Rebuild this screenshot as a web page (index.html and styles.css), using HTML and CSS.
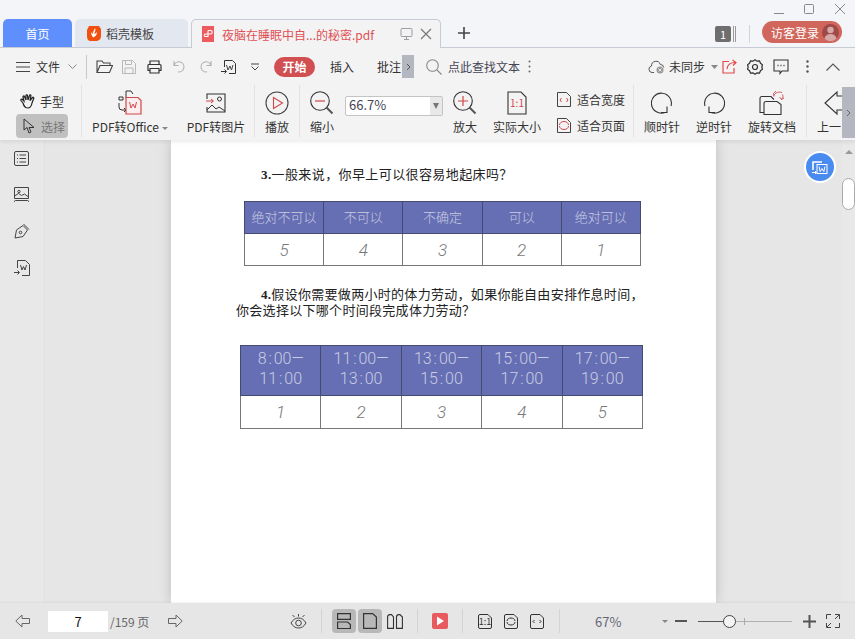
FILE: index.html
```html
<!DOCTYPE html>
<html lang="zh-CN">
<head>
<meta charset="utf-8">
<title>PDF</title>
<link rel="stylesheet" href="styles.css">
</head>
<body>
<div class="app">

  <header class="tabbar">
    <div class="tab tab-home">首页</div>
    <div class="tab tab-tpl">
      <svg class="ic" width="14" height="16" viewBox="0 0 14 16"><path d="M2 1h10l2 3v7c0 3-2 5-6 5H4c-3 0-4-2-4-5V5z" fill="#f2500f"/><path d="M8 3c1 2 0 4-1 6 1 0 2-1 3-2 0 3-2 5-4 5.500C5 11 4 9 4 7l1.500 2C6 7 7 5 8 3z" fill="#fff"/></svg>
      <span>稻壳模板</span>
    </div>
    <div class="tab tab-doc">
      <svg class="ic" width="12" height="16" viewBox="0 0 12 16"><rect width="12" height="16" fill="#ec5b5f"/><path d="M6 4.500h2.500a1.500 1.500 0 0 1 0 3.500H6m0-3.500V11M6 10.500H3.500a1 1 0 0 1 0-2.500H6" fill="none" stroke="#fff" stroke-width="1.100"/></svg>
      <span class="doc-title">夜脑在睡眠中自...的秘密.pdf</span>
      <svg class="ic ml-25" width="13" height="14" viewBox="0 0 13 14" fill="none" stroke="#9a9da3"><rect x="1" y="1.500" width="11" height="8" rx="1"/><path d="M6.500 9.500v3M4 12.500h5"/></svg>
      <svg class="ic ml-7" width="12" height="12" viewBox="0 0 12 12" fill="none" stroke="#777" stroke-width="1.200"><path d="M1 1l10 10M11 1L1 11"/></svg>
    </div>
    <svg class="ic plus" width="12" height="12" viewBox="0 0 12 12" fill="none" stroke="#444" stroke-width="1.600"><path d="M6 0v12M0 6h12"/></svg>

    <div class="tab-right">
      <div class="winctl">
        <svg class="ic" width="12" height="12" viewBox="0 0 12 12" fill="none" stroke="#888"><path d="M1 10.500h10"/></svg>
        <svg class="ic ml-18" width="12" height="12" viewBox="0 0 12 12" fill="none" stroke="#888"><rect x="1.500" y="1.500" width="9" height="9" rx="1"/></svg>
        <svg class="ic ml-19" width="12" height="12" viewBox="0 0 12 12" fill="none" stroke="#888"><path d="M1 1l10 10M11 1L1 11"/></svg>
      </div>
      <div class="acct">
        <div class="pagebadge"><span class="pagebadge-n">1</span></div>
        <div class="acct-sep"></div>
        <div class="login">
          <span>访客登录</span>
          <svg class="ic" width="17" height="17" viewBox="0 0 17 17"><circle cx="8.500" cy="8.500" r="8.500" fill="#9f4a48"/><circle cx="8.500" cy="6" r="3.200" fill="#d6a9a6"/><path d="M2.500 14.500c.5-3 3-4.500 6-4.500s5.500 1.500 6 4.500a8 8 0 0 1-12 0z" fill="#d6a9a6"/></svg>
        </div>
      </div>
    </div>
  </header>

  <nav class="menubar">
    <svg class="ic ml-16" width="14" height="10" viewBox="0 0 14 10" fill="none" stroke="#444"><path d="M0 .500h14M0 5h14M0 9.500h14"/></svg>
    <span class="ml-6">文件</span>
    <svg class="ic ml-8" width="9" height="5" viewBox="0 0 9 5" fill="none" stroke="#888"><path d="M.5.500l4 4 4-4"/></svg>
    <div class="vsep ml-9"></div>
    <svg class="ic ml-9" width="17" height="13" viewBox="0 0 17 13" fill="none" stroke="#444" stroke-width="1.100"><path d="M3 12.500H1V1h5l1.500 2H14v2.500M1 12.500l3-7h12.500l-3 7z"/></svg>
    <svg class="ic ml-9" width="14" height="14" viewBox="0 0 14 14" fill="none" stroke="#b8b8b8"><path d="M.5.500h10l3 3v10H.5zM3.500.500v4h6v-4M3 13.500V8h8v5.500"/></svg>
    <svg class="ic ml-11" width="15" height="14" viewBox="0 0 15 14" fill="none" stroke="#333" stroke-width="1.200"><path d="M3 4.500V1h9v3.500M3 10.500H1V5.500a1 1 0 0 1 1-1h11a1 1 0 0 1 1 1v5h-2M3 8.500h9V13H3z"/></svg>
    <svg class="ic ml-11" width="13" height="13" viewBox="0 0 13 13" fill="none" stroke="#b0b0b0" stroke-width="1.100"><path d="M1 1v4.500h4.500M1.200 5.300A5 5 0 1 1 5 11.800"/></svg>
    <svg class="ic ml-13" width="13" height="13" viewBox="0 0 13 13" fill="none" stroke="#b0b0b0" stroke-width="1.100"><path d="M12 1v4.500H7.500M11.800 5.300A5 5 0 1 0 8 11.800"/></svg>
    <svg class="ic ml-9" width="16" height="16" viewBox="0 0 16 16" fill="none" stroke="#333"><path d="M3.500 8V1.500h8l3 3v10H8"/><path d="M5.500 6l1.500 5 2-4 1.500 4 1.500-5" stroke="#444"/><path d="M0 12.500h5M3.500 10.500l2 2-2 2"/></svg>
    <svg class="ic ml-14" width="8" height="8" viewBox="0 0 8 8" fill="none" stroke="#444"><path d="M0 1h8M.5 3.500L4 7l3.500-3.500"/></svg>
    <div class="pill ml-15">开始</div>
    <span class="ml-15">插入</span>
    <span class="ml-23">批注</span>
    <div class="scroll-stub ml-1"><svg width="5" height="8" viewBox="0 0 5 8" fill="none" stroke="#555"><path d="M1 1l3 3-3 3"/></svg></div>
    <svg class="ic ml-12" width="16" height="16" viewBox="0 0 16 16" fill="none" stroke="#888" stroke-width="1.100"><circle cx="6.500" cy="6.500" r="5.800"/><path d="M11 11l4.500 4.500"/></svg>
    <span class="ml-6 find">点此查找文本</span>
    <svg class="ic ml-8" width="3" height="13" viewBox="0 0 3 13" fill="#666"><circle cx="1.500" cy="1.500" r="1"/><circle cx="1.500" cy="6.500" r="1"/><circle cx="1.500" cy="11.500" r="1"/></svg>

    <div class="menu-right">
      <svg class="ic" width="17" height="14" viewBox="0 0 17 14" fill="none" stroke="#555"><path d="M6 12.500H4a3.300 3.300 0 0 1-.5-6.500 4.500 4.500 0 0 1 8.800-1.500 3.500 3.500 0 0 1 3.500 3"/><circle cx="12" cy="10" r="3.500" fill="#999" stroke="none"/><path d="M10.500 8.500l3 3M13.500 8.500l-3 3" stroke="#fff" stroke-width=".8"/></svg>
      <span class="ml-4">未同步</span>
      <svg class="ml-6 ic" width="7" height="4" viewBox="0 0 7 4" fill="#888"><path d="M0 0h7L3.500 4z"/></svg>
      <svg class="ic ml-4" width="15" height="15" viewBox="0 0 15 15" fill="none" stroke="#e3494c" stroke-width="1.200"><path d="M7 2.500H1v11.500h11V9M5 10c.5-4 3-6.500 8-6.500M10.500 1L14 3.500 11 6.500"/></svg>
      <svg class="ic ml-10" width="16" height="16" viewBox="0 0 16 16" fill="none" stroke="#333" stroke-width="1.200"><path d="M8 .8l2 1.400 2.500-.2 1 2.300 2 1.500-.7 2.200.7 2.200-2 1.500-1 2.300-2.500-.2L8 15.200l-2-1.400-2.500.2-1-2.300-2-1.500.7-2.200L.5 5.800l2-1.500 1-2.300 2.500.2z"/><circle cx="8" cy="8" r="2.500"/></svg>
      <svg class="ic ml-10" width="16" height="16" viewBox="0 0 16 16" fill="none" stroke="#333" stroke-width="1.100"><path d="M1 1h14v11H9l-2 2.500V12H1z"/><path d="M4.500 6.500h1M7.500 6.500h1M10.500 6.500h1" stroke-width="1.400"/></svg>
      <svg class="ic ml-17" width="3" height="13" viewBox="0 0 3 13" fill="#555"><circle cx="1.500" cy="1.500" r="1.200"/><circle cx="1.500" cy="6.500" r="1.200"/><circle cx="1.500" cy="11.500" r="1.200"/></svg>
      <svg class="ic ml-17" width="14" height="8" viewBox="0 0 14 8" fill="none" stroke="#555" stroke-width="1.100"><path d="M.5 7.500L7 1l6.500 6.500"/></svg>
    </div>
  </nav>

  <section class="ribbon">
    <div class="group-mode">
      <div class="mode-row">
        <svg class="ic" width="16" height="15" viewBox="0 0 16 15" fill="none" stroke="#222" stroke-width="1.200"><path d="M3 9L1 6.500c-.5-1 .5-2 1.500-1L4 7 3 3c-.2-1 1-1.500 1.500-.5L6 6 6 1.500c0-1 1.500-1 1.500 0L8 6l1.500-4.500c.3-1 1.600-.6 1.400.4L10 6.500l2.500-3c.7-.7 1.700 0 1.200 1L12 9c-.5 3-1.500 5-4.500 5S4 12 3 9z"/></svg>
        <span class="ml-4">手型</span>
      </div>
      <div class="mode-row mode-active">
        <svg class="ic" width="12" height="16" viewBox="0 0 12 16" fill="none" stroke="#333"><path d="M1 1v11l3-2.500L6 15l2-1-2-4.500h5z"/></svg>
        <span class="ml-6">选择</span>
      </div>
    </div>
    <div class="vsep-r"></div>
    <div class="tool w-96">
      <svg class="tool-ic" width="24" height="26" viewBox="0 0 24 26" fill="none"><path d="M8 8V1h5l2 3M1 7h4v3H1zM1 13v4a3 3 0 0 0 3 3h4M6 18l2 2-2 2" stroke="#333"/><path d="M8 7.500h12l3 3V24H8z" fill="#fbeeee" stroke="#d2474a" stroke-width="1.200"/><path d="M11.500 12l1.500 6 2-4 2 4 1.500-6" stroke="#d2474a"/></svg>
      <span>PDF转Office<i class="caret"></i></span>
    </div>
    <div class="tool w-76">
      <svg class="tool-ic" width="20" height="20" viewBox="0 0 20 20" fill="none"><path d="M1 6V1h18v18H1v-5" stroke="#333" stroke-width="1.100"/><circle cx="13.500" cy="6" r="2" stroke="#333"/><path d="M0 8h7M5 6l2.500 2L5 10" stroke="#d2474a"/><path d="M1 17l5-5 4 4 3-2 6 4" stroke="#333"/></svg>
      <span>PDF转图片</span>
    </div>
    <div class="vsep-r"></div>
    <div class="tool w-44">
      <svg class="tool-ic" width="24" height="24" viewBox="0 0 24 24" fill="none"><circle cx="12" cy="12" r="11" stroke="#444" stroke-width="1.100"/><path d="M8.500 6.500v11l9-5.500z" stroke="#d2474a" stroke-width="1.100"/></svg>
      <span>播放</span>
    </div>
    <div class="vsep-r"></div>
    <div class="tool w-44">
      <svg class="tool-ic" width="24" height="24" viewBox="0 0 24 24" fill="none"><circle cx="10" cy="10" r="9.300" stroke="#333" stroke-width="1.100"/><path d="M5 10h10" stroke="#d2474a" stroke-width="1.200"/><path d="M16.500 16.500l6 6" stroke="#555" stroke-width="2"/></svg>
      <span>缩小</span>
    </div>
    <div class="zoombox">
      <span class="zoombox-val">66.7%</span>
      <div class="zoombox-btn"><i class="caret caret-d"></i></div>
    </div>
    <div class="tool w-44">
      <svg class="tool-ic" width="24" height="24" viewBox="0 0 24 24" fill="none"><circle cx="10" cy="10" r="9.300" stroke="#333" stroke-width="1.100"/><path d="M5 10h10M10 5v10" stroke="#d2474a" stroke-width="1.200"/><path d="M16.500 16.500l6 6" stroke="#555" stroke-width="2"/></svg>
      <span>放大</span>
    </div>
    <div class="tool w-60">
      <svg class="tool-ic" width="20" height="24" viewBox="0 0 20 24" fill="none"><path d="M1 1h13l5 5v17H1z" stroke="#333" stroke-width="1.100"/><text x="10" y="16" class="svg-ratio">1:1</text></svg>
      <span>实际大小</span>
    </div>
    <div class="group-fit">
      <div class="fit-row">
        <svg class="ic" width="14" height="15" viewBox="0 0 14 15" fill="none"><path d="M.5.500h9l4 4v10H.5z" stroke="#444"/><path d="M4.500 6L3 8l1.500 2M9.500 6L11 8l-1.500 2" stroke="#d2474a"/></svg>
        <span class="ml-6">适合宽度</span>
      </div>
      <div class="fit-row">
        <svg class="ic" width="14" height="15" viewBox="0 0 14 15" fill="none"><path d="M.5.500h9l4 4v10H.5z" stroke="#444"/><path d="M2.500 7c0-2 2-3.500 4.500-3.500M11.500 8c0 2-2 3.500-4.500 3.500M2.500 8c0 2 2 3.500 4.500 3.500M11.500 7c0-2-2-3.500-4.500-3.500" stroke="#d2474a"/></svg>
        <span class="ml-6">适合页面</span>
      </div>
    </div>
    <div class="vsep-r"></div>
    <div class="tool w-56">
      <svg class="tool-ic" width="22" height="22" viewBox="0 0 22 22" fill="none" stroke="#333" stroke-width="1.100"><path d="M14 20.500A10 10 0 1 1 20 14M16 14.500v6h-6"/></svg>
      <span>顺时针</span>
    </div>
    <div class="tool w-48">
      <svg class="tool-ic" width="22" height="22" viewBox="0 0 22 22" fill="none" stroke="#333" stroke-width="1.100"><path d="M8 20.500A10 10 0 1 0 2 14M6 14.500v6h6"/></svg>
      <span>逆时针</span>
    </div>
    <div class="tool w-68">
      <svg class="tool-ic" width="26" height="25" viewBox="0 0 26 25" fill="none"><path d="M5 22H1V8a2 2 0 0 1 2-2h9l3 3" stroke="#333" stroke-width="1.100"/><path d="M5 13a2 2 0 0 1 2-2h11l4 3v10H5z" stroke="#333" stroke-width="1.100"/><path d="M15 5c1-3 5-4 8-3M17 .5L14.500 3 15 6M22 9c2-1 2.500-3 1.500-5M20.500 6.500L22.500 9l2.500-1.500" stroke="#d2474a" stroke-width=".9"/></svg>
      <span>旋转文档</span>
    </div>
    <div class="vsep-r"></div>
    <div class="tool tool-last">
      <svg class="tool-ic" width="18" height="24" viewBox="0 0 18 24" fill="none" stroke="#333" stroke-width="1.100"><path d="M18 5h-5V1L1 12l12 11v-4h5"/></svg>
      <span>上一</span>
    </div>
    <div class="ribbon-more"><svg width="5" height="8" viewBox="0 0 5 8" fill="none" stroke="#666"><path d="M1 1l3 3-3 3"/></svg></div>
  </section>

  <main class="workspace">
    <aside class="sidebar">
      <svg width="15" height="15" viewBox="0 0 15 15" fill="none" stroke="#444"><rect x=".5" y=".5" width="14" height="14" rx="1.500"/><path d="M5.500 4h6.500M5.500 7.500h6.500M5.500 11h6.500M3 4h1M3 7.500h1M3 11h1"/></svg>
      <svg width="15" height="16" viewBox="0 0 15 16" fill="none" stroke="#444"><path d="M.5.500h14v11H.5zM.5 15v-.5a1 1 0 0 1 1-1h12a1 1 0 0 1 1 1v.5"/><circle cx="5" cy="4.500" r="1.200"/><path d="M.5 9l4-2.500 3 2 3-1.500 4 3"/></svg>
      <svg width="16" height="16" viewBox="0 0 16 16" fill="none" stroke="#444"><path d="M1 15l1.500-8L9 2.500l4.500 4.500L9 13.500z"/><path d="M9.500 1l5.500 5.500"/><circle cx="6.500" cy="9.500" r="1.300"/></svg>
      <svg width="16" height="16" viewBox="0 0 16 16" fill="none" stroke="#444"><path d="M3.500 8V.5h8l4 4v11H8"/><path d="M6.500 5l1.500 5 1.500-3.500L11 10l1.500-5"/><path d="M0 12.500h5M3.500 10.500l2 2-2 2"/></svg>
    </aside>
    <div class="canvas">
      <article class="page">
        <p class="q q3"><b>3.</b>一般来说，你早上可以很容易地起床吗？</p>
        <table class="sheet sheet-a">
          <tr class="row-a"><th>绝对不可以</th><th>不可以</th><th>不确定</th><th>可以</th><th>绝对可以</th></tr>
          <tr class="row-b"><td>5</td><td>4</td><td>3</td><td>2</td><td>1</td></tr>
        </table>
        <p class="q q4"><b>4.</b>假设你需要做两小时的体力劳动，如果你能自由安排作息时间，<br>你会选择以下哪个时间段完成体力劳动？</p>
        <table class="sheet sheet-b">
          <tr class="row-c"><th>8 : 00—<br>11 : 00</th><th>11 : 00—<br>13 : 00</th><th>13 : 00—<br>15 : 00</th><th>15 : 00—<br>17 : 00</th><th>17 : 00—<br>19 : 00</th></tr>
          <tr class="row-d"><td>1</td><td>2</td><td>3</td><td>4</td><td>5</td></tr>
        </table>
      </article>
      <div class="float-btn">
        <svg width="16" height="15" viewBox="0 0 16 15" fill="none" stroke="#fff"><path d="M1 10V2h9" stroke-width="1.600"/><rect x="5" y="4.500" width="10" height="9" fill="#4a8bf0"/><path d="M7 6.500l1.200 5 1.800-3 1.800 3 1.200-5"/><path d="M0 12.500h4M3 11l1.500 1.500L3 14"/></svg>
      </div>
    </div>
    <div class="scrollbar">
      <i class="scroll-up"></i>
      <div class="scroll-thumb"></div>
    </div>
  </main>

  <footer class="statusbar">
    <svg class="ic ml-15" width="15" height="14" viewBox="0 0 15 14" fill="none" stroke="#666"><path d="M14.500 4.500H7V1L.8 7 7 13V9.500h7.500z"/></svg>
    <div class="pageinput ml-18">7</div>
    <span class="pagecount ml-2">/159 页</span>
    <svg class="ic ml-18" width="15" height="14" viewBox="0 0 15 14" fill="none" stroke="#666"><path d="M.5 4.500H8V1l6.200 6L8 13V9.500H.5z"/></svg>
    <svg class="ic ml-107" width="17" height="15" viewBox="0 0 17 15" fill="none" stroke="#444"><path d="M1 9c2-3.500 4.500-5 7.500-5s5.500 1.500 7.500 5c-2 3.500-4.500 5-7.500 5S3 12.500 1 9z"/><circle cx="8.500" cy="9" r="2.800"/><path d="M8.500 0v2.500M2.500 1L4.500 3M14.500 1L12.500 3"/></svg>
    <div class="vsep-s ml-14"></div>
    <div class="viewbtn viewbtn-on ml-10">
      <svg width="14" height="16" viewBox="0 0 14 16" fill="none" stroke="#333" stroke-width="1.200"><path d="M.6.600h12.800v5.800H.6zM.6 9h10l2.800 2.500v4H.6z"/></svg>
    </div>
    <div class="viewbtn viewbtn-on ml-2">
      <svg width="14" height="16" viewBox="0 0 14 16" fill="none" stroke="#333" stroke-width="1.200"><path d="M.6.600h9l3.800 3.500v11.300H.6z"/></svg>
    </div>
    <svg class="ic ml-5" width="16" height="15" viewBox="0 0 16 15" fill="none" stroke="#333" stroke-width="1.100"><path d="M.6 14.400V3Q.6.600 3 .6h1.500L6.500 3v11.400zM9.500 14.400V3Q9.500.600 12 .6h1L15.400 3v11.400z"/></svg>
    <div class="vsep-s ml-14"></div>
    <svg class="ic ml-14" width="16" height="16" viewBox="0 0 16 16"><rect width="16" height="16" rx="2" fill="#e85a5e"/><path d="M5 3.500v9l7-4.500z" fill="#fff"/></svg>
    <div class="vsep-s ml-14"></div>
    <svg class="ic ml-15" width="14" height="15" viewBox="0 0 14 15" fill="none"><path d="M.5 2a1.500 1.500 0 0 1 1.500-1.500h8l3.500 3.500v9a1.500 1.500 0 0 1-1.500 1.500H2A1.500 1.500 0 0 1 .5 13z" stroke="#333"/><text x="7" y="11" class="svg-ratio-s">1:1</text></svg>
    <svg class="ic ml-12" width="14" height="15" viewBox="0 0 14 15" fill="none" stroke="#333"><path d="M.5 2a1.500 1.500 0 0 1 1.500-1.500h8l3.500 3.500v9a1.500 1.500 0 0 1-1.500 1.500H2A1.500 1.500 0 0 1 .5 13z"/><path d="M3 7c0-2 2-3 4-3M11 8c0 2-2 3-4 3M3 8c0 2 2 3 4 3M11 7c0-2-2-3-4-3"/></svg>
    <svg class="ic ml-12" width="14" height="15" viewBox="0 0 14 15" fill="none" stroke="#333"><path d="M.5 2a1.500 1.500 0 0 1 1.500-1.500h8l3.500 3.500v9a1.500 1.500 0 0 1-1.500 1.500H2A1.500 1.500 0 0 1 .5 13z"/><path d="M4.500 6L3 7.500 4.500 9M9.500 6L11 7.500 9.500 9"/></svg>
    <div class="vsep-s ml-15"></div>
    <span class="zoomval">67%</span>
    <i class="caret caret-s"></i>
    <svg class="ic ml-7" width="12" height="2" viewBox="0 0 12 2"><rect width="12" height="2" fill="#555"/></svg>
    <div class="slider ml-11">
      <div class="slider-fill"></div>
      <div class="slider-tick"></div>
      <div class="slider-knob"></div>
    </div>
    <svg class="ic ml-11" width="13" height="13" viewBox="0 0 13 13"><path d="M5.500 0h2v5.500H13v2H7.500V13h-2V7.500H0v-2h5.500z" fill="#555"/></svg>
    <svg class="ic ml-10" width="14" height="14" viewBox="0 0 14 14" fill="none" stroke="#444"><path d="M.5 5V.5H5M9 .5h4.500V5M13.500 9v4.500H9M5 13.500H.5V9M1 13l4-4M13 1L9 5"/></svg>
  </footer>
</div>
</body>
</html>
```

FILE: styles.css
```css
* { box-sizing: border-box; }
html, body { margin: 0; padding: 0; }
body {
  font-family: "Noto Sans CJK SC", "Noto Sans", sans-serif;
  font-size: 12px;
  color: #333;
}
.app {
  width: 855px;
  height: 639px;
  display: flex;
  flex-direction: column;
  overflow: hidden;
  background: #e6e6e6;
}
.ic { flex: none; display: block; }
.ml-1 { margin-left: 1px; } .ml-2 { margin-left: 2px; } .ml-4 { margin-left: 4px; }
.ml-5 { margin-left: 5px; } .ml-6 { margin-left: 6px; } .ml-7 { margin-left: 7px; }
.ml-8 { margin-left: 8px; } .ml-9 { margin-left: 9px; } .ml-10 { margin-left: 10px; }
.ml-11 { margin-left: 11px; } .ml-12 { margin-left: 12px; } .ml-13 { margin-left: 13px; }
.ml-14 { margin-left: 14px; } .ml-15 { margin-left: 15px; } .ml-16 { margin-left: 16px; }
.ml-17 { margin-left: 17px; } .ml-18 { margin-left: 18px; } .ml-19 { margin-left: 19px; }
.ml-23 { margin-left: 23px; } .ml-25 { margin-left: 25px; } .ml-107 { margin-left: 107px; }

/* tab strip */
.tabbar {
  height: 48px;
  flex: none;
  display: flex;
  align-items: flex-end;
  padding-left: 3px;
  background: #f4f5f8;
  border-bottom: 1px solid #c6cad4;
}
.tab {
  height: 29px;
  margin-bottom: -1px;
  display: flex;
  align-items: center;
  border-radius: 5px 5px 0 0;
}
.tab-home {
  width: 69px;
  justify-content: center;
  background: #5f8ffd;
  color: #fff;
  font-size: 12px;
  height: 28px;
  margin-bottom: 0;
}
.tab-tpl {
  width: 113px;
  height: 28px;
  margin-bottom: 0;
  margin-left: 3px;
  padding-left: 12px;
  gap: 5px;
  background: #e3e7f0;
  color: #444;
}
.tab-doc {
  width: 250px;
  margin-left: 3px;
  padding-left: 10px;
  background: #f3f3f3;
  border: 1px solid #c6cad4;
  border-bottom: 0;
}
.doc-title { margin-left: 8px; color: #e05055; white-space: nowrap; width: 153px; }
.plus { margin: 0 0 8px 17px; }
.tab-right {
  margin-left: auto;
  height: 47px;
  display: flex;
  flex-direction: column;
  align-items: flex-end;
}
.winctl {
  display: flex;
  padding: 3px 9px 0 0;
  height: 21px;
}
.acct { display: flex; align-items: center; height: 22px; padding-right: 13px; }
.pagebadge {
  width: 21px;
  height: 16px;
  margin-top: 3px;
  border-right: 3px double #999;
}
.pagebadge-n {
  display: block;
  width: 16px;
  height: 16px;
  line-height: 16px;
  text-align: center;
  background: #6e6e6e;
  color: #fff;
  font-size: 11px;
  border-radius: 2px;
}
.acct-sep { width: 1px; height: 18px; margin: 3px 12px 0 13px; background: #d4d4d8; }
.login {
  width: 80px;
  height: 22px;
  display: flex;
  align-items: center;
  justify-content: space-between;
  padding: 0 3px 0 9px;
  border-radius: 11px;
  background: #d0665c;
  color: #fff;
}

/* menu row */
.menubar {
  height: 37px;
  flex: none;
  display: flex;
  align-items: center;
  background: #f3f3f3;
  white-space: nowrap;
}
.vsep { width: 1px; height: 24px; background: #c8c8c8; }
.pill {
  width: 41px;
  height: 20px;
  line-height: 20px;
  text-align: center;
  border-radius: 10px;
  background: #d14f50;
  color: #fff;
  font-weight: 700;
}
.scroll-stub {
  width: 12px;
  height: 23px;
  display: flex;
  align-items: center;
  justify-content: center;
  background: #b4b7bf;
}
.find { color: #445; }
.menu-right {
  margin-left: auto;
  padding-right: 15px;
  display: flex;
  align-items: center;
}

/* ribbon */
.ribbon {
  position: relative;
  z-index: 2;
  height: 55px;
  flex: none;
  display: flex;
  background: #f3f3f3;
  box-shadow: 0 2px 4px rgba(0, 0, 0, .08);
  white-space: nowrap;
}
.group-mode {
  width: 81px;
  padding-left: 16px;
  display: flex;
  flex-direction: column;
}
.mode-row {
  width: 52px;
  height: 24px;
  margin-top: 4px;
  display: flex;
  align-items: center;
  padding-left: 4px;
}
.mode-active {
  margin-top: 1px;
  padding-left: 7px;
  background: #c0c0c0;
  border-radius: 4px;
  color: #777;
}
.vsep-r { width: 1px; height: 52px; flex: none; background: #e2e2e2; }
.tool {
  height: 55px;
  display: flex;
  flex-direction: column;
  align-items: center;
  flex: none;
}
.tool-ic { height: 26px; margin-top: 5px; flex: none; display: block; }
.tool > span { position: relative; line-height: 16px; margin-top: 3px; }
.w-96 { width: 96px; } .w-76 { width: 76px; } .w-68 { width: 68px; } .w-60 { width: 60px; }
.w-56 { width: 56px; } .w-48 { width: 48px; } .w-44 { width: 44px; }
.tool-last { width: 47px; align-items: flex-start; padding-left: 10px; }
.tool-last .tool-ic { margin-left: 7px; }
.caret {
  display: inline-block;
  width: 0;
  height: 0;
  margin-left: 3px;
  vertical-align: 2px;
  border-left: 3px solid transparent;
  border-right: 3px solid transparent;
  border-top: 3px solid #888;
}
.zoombox {
  width: 98px;
  height: 20px;
  margin: 11px 0 0 1px;
  display: flex;
  align-items: center;
  justify-content: space-between;
  flex: none;
  padding-left: 3px;
  background: #fff;
  border: 1px solid #c4c4c4;
  border-radius: 2px;
  color: #445;
  font-size: 13px;
}
.zoombox-val { line-height: 14px; padding-bottom: 2px; }
.zoombox-btn {
  width: 12px;
  height: 18px;
  display: flex;
  align-items: center;
  justify-content: center;
  background: #e8e8e8;
}
.caret-d { margin: 0; border-left-width: 3.5px; border-right-width: 3.5px; border-top: 6px solid #777; }
.svg-ratio { font-size: 10px; fill: #d2474a; text-anchor: middle; }
.svg-ratio-s { font-size: 9px; fill: #333; text-anchor: middle; }
.group-fit { width: 86px; flex: none; padding: 1px 0 0 10px; }
.fit-row { height: 26px; display: flex; align-items: center; margin-top: 0; }
.ribbon-more {
  position: absolute;
  right: 0;
  top: 2px;
  width: 13px;
  height: 51px;
  display: flex;
  align-items: center;
  justify-content: center;
  background: #b4b7bf;
}

/* workspace */
.workspace {
  flex: 1;
  min-height: 0;
  display: flex;
  background: #e6e6e6;
}
.sidebar {
  width: 45px;
  flex: none;
  display: flex;
  flex-direction: column;
  align-items: center;
  gap: 20.5px;
  padding: 11px 1px 0 0;
  border-right: 1px solid #e1e1e1;
  background: #e8e8e8;
}
.sidebar svg { display: block; }
.canvas {
  position: relative;
  flex: 1;
  min-width: 0;
  padding-left: 126px;
  overflow: hidden;
}
.page {
  width: 545px;
  height: 463px;
  background: #fff;
  box-shadow: 0 0 12px rgba(0, 0, 0, .18);
  overflow: hidden;
  font-family: "Liberation Serif", "Noto Sans CJK SC", serif;
}
.q {
  margin: 0;
  font-size: 13px;
  color: #222;
  white-space: nowrap;
}
.q3 { margin: 26px 0 0 90px; line-height: 17px; letter-spacing: .4px; }
.q4 { margin: 21px 0 0 65px; line-height: 16px; text-indent: 25px; letter-spacing: .3px; }
.sheet {
  table-layout: fixed;
  border-collapse: collapse;
  font-family: Roboto, "Noto Sans CJK SC", sans-serif;
}
.sheet th, .sheet td { border: 1px solid #444b6e; padding: 0; text-align: center; }
.sheet th { background: #666fb3; color: #c9cde4; font-weight: 300; font-size: 13px; padding-bottom: 3px; }
.sheet td { border-color: #777; color: #777; font-style: italic; font-weight: 300; font-size: 17px; }
.sheet-a { width: 397px; margin: 18px 0 0 73px; }
.sheet-b { width: 403px; margin: 26px 0 0 69px; }
.sheet-b th { font-size: 16px; line-height: 20px; word-spacing: -2px; }
.row-a, .row-b { height: 32px; }
.row-c { height: 50px; }
.row-d { height: 33px; }
.float-btn {
  position: absolute;
  top: 11px;
  right: 6px;
  width: 32px;
  height: 32px;
  display: flex;
  align-items: center;
  justify-content: center;
  border-radius: 50%;
  background: #4a8bf0;
  border: 2px solid #fff;
}
.scrollbar {
  width: 13px;
  flex: none;
  display: flex;
  flex-direction: column;
  align-items: center;
  background: #e8e8e8;
}
.scroll-up {
  width: 0;
  height: 0;
  margin-top: 10px;
  border-left: 4px solid transparent;
  border-right: 4px solid transparent;
  border-bottom: 4px solid #999;
}
.scroll-thumb {
  width: 13px;
  height: 32px;
  margin-top: 24px;
  background: #fff;
  border: 1px solid #aaa;
  border-radius: 7px;
}

/* status bar */
.statusbar {
  position: relative;
  z-index: 2;
  height: 36px;
  flex: none;
  display: flex;
  align-items: center;
  background: #e6e6e6;
  box-shadow: 0 -1px 2px rgba(0, 0, 0, .06);
}
.pageinput {
  width: 60px;
  height: 21px;
  line-height: 21px;
  text-align: center;
  background: #fff;
  color: #111;
  font-size: 13px;
}
.pagecount { width: 40px; color: #666; white-space: nowrap; font-size: 12px; }
.vsep-s { width: 1px; height: 24px; background: #d4d4d4; flex: none; }
.viewbtn {
  width: 24px;
  height: 24px;
  display: flex;
  align-items: center;
  justify-content: center;
  border-radius: 4px;
  flex: none;
}
.viewbtn-on { background: #b8b8b8; }
.zoomval { width: 102px; padding-left: 35px; color: #667; font-size: 13px; }
.caret-s { margin: 0; }
.slider {
  position: relative;
  width: 94px;
  height: 13px;
  flex: none;
}
.slider::before {
  content: "";
  position: absolute;
  left: 0;
  right: 0;
  top: 6px;
  height: 1px;
  background: #b0b0b0;
}
.slider-fill { position: absolute; left: 0; top: 6px; width: 28px; height: 1px; background: #555; }
.slider-tick { position: absolute; left: 46px; top: 3px; width: 1px; height: 7px; background: #aaa; }
.slider-knob {
  position: absolute;
  left: 25px;
  top: 0;
  width: 13px;
  height: 13px;
  background: #f4f4f4;
  border: 1px solid #444;
  border-radius: 50%;
}
```
